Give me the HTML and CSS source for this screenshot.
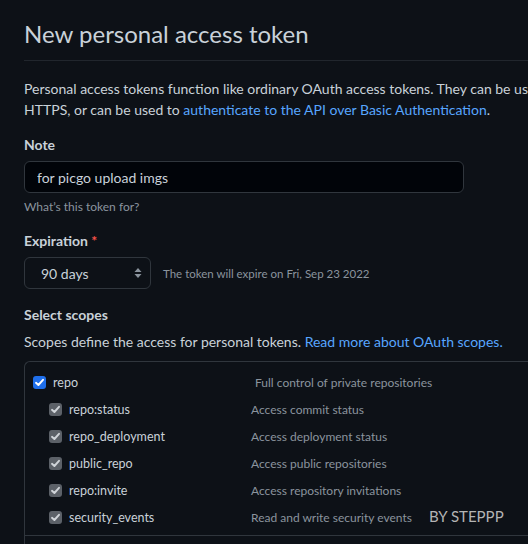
FILE: index.html
```html
<!DOCTYPE html>
<html lang="en">
<head>
<meta charset="utf-8">
<title>New personal access token</title>
<link rel="stylesheet" href="styles.css">
</head>
<body>
<main class="page">
  <div class="header">
    <h1 class="title">New personal access token</h1>
  </div>
  <p class="intro">Personal access tokens function like ordinary OAuth access tokens. They can be used instead of a password for Git over<br>HTTPS, or can be used to <a href="#" class="link">authenticate to the API over Basic Authentication</a>.</p>

  <div class="group group-note">
    <label class="label" for="note">Note</label>
    <input id="note" class="input" type="text" value="for picgo upload imgs">
    <p class="hint">What’s this token for?</p>
  </div>

  <div class="group group-exp">
    <label class="label">Expiration <span class="req">*</span></label>
    <div class="exp-row">
      <div class="select">
        <span>90 days</span>
        <svg class="arrows" width="8" height="12" viewBox="0 0 8 12"><path d="M4 1 L7.5 5 H0.5 Z M4 11 L7.5 7 H0.5 Z" fill="#8b949e"/></svg>
      </div>
      <span class="exp-note">The token will expire on Fri, Sep 23 2022</span>
    </div>
  </div>

  <div class="group group-scopes">
    <div class="label">Select scopes</div>
    <p class="scopes-desc">Scopes define the access for personal tokens. <a href="#" class="link">Read more about OAuth scopes.</a></p>
    <div class="scope-box">
      <div class="scope-group">
        <div class="row main">
          <span class="cb cb-blue"><svg width="13" height="13" viewBox="0 0 13 13"><path d="M3 6.8 L5.4 9 L10 3.8" fill="none" stroke="#fff" stroke-width="1.9" stroke-linecap="round" stroke-linejoin="round"/></svg></span>
          <span class="name">repo</span>
          <span class="desc">Full control of private repositories</span>
        </div>
        <div class="row sub">
          <span class="cb cb-grey"><svg width="13" height="13" viewBox="0 0 13 13"><path d="M3 6.8 L5.4 9 L10 3.8" fill="none" stroke="#d0d4d9" stroke-width="1.9" stroke-linecap="round" stroke-linejoin="round"/></svg></span>
          <span class="name">repo:status</span>
          <span class="desc">Access commit status</span>
        </div>
        <div class="row sub">
          <span class="cb cb-grey"><svg width="13" height="13" viewBox="0 0 13 13"><path d="M3 6.8 L5.4 9 L10 3.8" fill="none" stroke="#d0d4d9" stroke-width="1.9" stroke-linecap="round" stroke-linejoin="round"/></svg></span>
          <span class="name">repo_deployment</span>
          <span class="desc">Access deployment status</span>
        </div>
        <div class="row sub">
          <span class="cb cb-grey"><svg width="13" height="13" viewBox="0 0 13 13"><path d="M3 6.8 L5.4 9 L10 3.8" fill="none" stroke="#d0d4d9" stroke-width="1.9" stroke-linecap="round" stroke-linejoin="round"/></svg></span>
          <span class="name">public_repo</span>
          <span class="desc">Access public repositories</span>
        </div>
        <div class="row sub">
          <span class="cb cb-grey"><svg width="13" height="13" viewBox="0 0 13 13"><path d="M3 6.8 L5.4 9 L10 3.8" fill="none" stroke="#d0d4d9" stroke-width="1.9" stroke-linecap="round" stroke-linejoin="round"/></svg></span>
          <span class="name">repo:invite</span>
          <span class="desc">Access repository invitations</span>
        </div>
        <div class="row sub">
          <span class="cb cb-grey"><svg width="13" height="13" viewBox="0 0 13 13"><path d="M3 6.8 L5.4 9 L10 3.8" fill="none" stroke="#d0d4d9" stroke-width="1.9" stroke-linecap="round" stroke-linejoin="round"/></svg></span>
          <span class="name">security_events</span>
          <span class="desc">Read and write security events</span>
        </div>
      </div>
      <div class="scope-group empty"></div>
    </div>
  </div>
</main>
<div class="watermark">BY STEPPP</div>
</body>
</html>
```
FILE: styles.css
```css
html, body {
  margin: 0;
  padding: 0;
  background: #0d1117;
  overflow: hidden;
}
body {
  width: 528px;
  height: 544px;
  color: #c9d1d9;
  font-family: Lato, "Noto Sans", sans-serif;
  font-size: 14px;
  line-height: 21px;
  position: relative;
}
.page {
  padding: 16px 0 0 24px;
  white-space: nowrap;
  overflow: hidden;
}
.header {
  border-bottom: 1px solid #21262d;
  padding-bottom: 8px;
}
.title {
  margin: 0;
  font-size: 24px;
  line-height: 36px;
  font-weight: 400;
  color: #c9d1d9;
}
.intro {
  margin: 17px 0 0;
}
.link {
  color: #58a6ff;
  text-decoration: none;
}
.group-note { margin-top: 14px; }
.label {
  display: block;
  font-weight: 700;
  margin-bottom: 6px;
}
.input {
  display: block;
  box-sizing: border-box;
  width: 440px;
  height: 32px;
  margin: 0;
  padding: 0 12px;
  background: #010409;
  border: 1px solid #30363d;
  border-radius: 6px;
  color: #c9d1d9;
  font: inherit;
  outline: none;
}
.hint {
  margin: 5px 0 0;
  font-size: 12px;
  line-height: 18px;
  color: #8b949e;
}
.group-exp { margin-top: 14px; }
.req { color: #f85149; }
.exp-row {
  display: flex;
  align-items: center;
  gap: 12px;
}
.select {
  box-sizing: border-box;
  width: 127px;
  height: 32px;
  border: 1px solid #30363d;
  border-radius: 6px;
  background: #0d1117;
  display: flex;
  align-items: center;
  justify-content: space-between;
  padding: 0 8px 0 16px;
}
.exp-note {
  font-size: 11.5px;
  color: #8b949e;
}
.group-scopes { margin-top: 15px; }
.scopes-desc { margin: 6px 0 0; }
.scope-box {
  margin-top: 9px;
  border-top: 1px solid #30363d;
  border-left: 1px solid #30363d;
  border-top-left-radius: 6px;
}
.scope-group {
  border-bottom: 1px solid #30363d;
  padding: 7px 0 4px;
}
.scope-group.empty {
  border-bottom: 0;
  height: 40px;
}
.row {
  display: flex;
  align-items: center;
  height: 27px;
}
.row.main { padding-left: 8px; }
.row.sub { padding-left: 24px; }
.cb {
  width: 13px;
  height: 13px;
  border-radius: 3px;
  display: flex;
  flex: none;
}
.cb-blue { background: #1f6feb; }
.cb-grey { background: #5c6168; }
.name {
  font-size: 12.5px;
  margin-left: 7px;
}
.row.main .name { width: 202px; }
.row.sub .name { width: 182px; }
.desc {
  font-size: 12px;
  color: #8b949e;
}
.watermark {
  position: absolute;
  left: 429px;
  top: 505px;
  font-size: 15px;
  line-height: 22px;
  color: #b4b4b4;
  font-family: Lato, "Noto Sans", sans-serif;
}
```
